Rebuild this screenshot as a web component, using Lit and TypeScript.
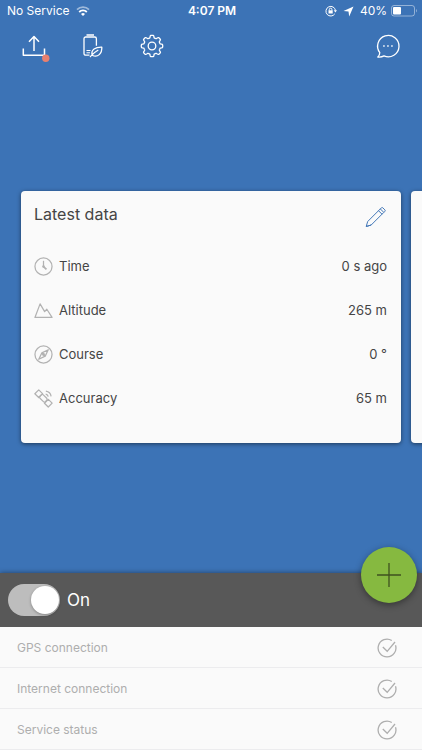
import { LitElement, html, css, svg } from "lit";
import { customElement, property, state } from "lit/decorators.js";

const rowIcons: Record<string, unknown> = {
  time: svg`<circle cx="10" cy="10" r="9"/><path d="M10 4v6" /><path d="M9.500 9.500l3.600 3.600" stroke-width="1.800"/><circle cx="10" cy="10" r=".7"/>`,
  altitude: svg`<path d="M1 17.300L6.400 3l4.800 8.200 2.300-2.500L19 17.300z"/>`,
  course: svg`<circle cx="10" cy="10" r="9"/><path d="M15 5L11.800 11.700 5 15 8.300 8.300z"/><path d="M8.300 8.300l3.500 3.400"/><circle cx="10" cy="10" r=".9"/>`,
  accuracy: svg`<path d="M.9 5L5 .9l4 4L4.900 9z"/><path d="M6.300 7.600l1.400-1.400a1.500 1.500 0 0 1 2.100 0L13.400 9.800a1.500 1.500 0 0 1 0 2.100L12 13.300a1.500 1.500 0 0 1-2.100 0L6.300 9.700a1.500 1.500 0 0 1 0-2.100z"/><path d="M11 15l4.100-4.100 4 4L15 19z"/><path d="M12.300 5.300a3.500 3.500 0 0 1 2.700 2.700M12.500 2.300a6.500 6.500 0 0 1 5.500 5.500"/>`,
};

@customElement("status-bar")
class StatusBar extends LitElement {
  static styles = css`
    :host {
      display: grid;
      grid-template-columns: 1fr auto 1fr;
      align-items: center;
      height: 22px;
      padding: 0 5px 0 7px;
      font-size: 12px;
      line-height: 16px;
    }
    .group {
      display: flex;
      align-items: center;
      gap: 6px;
    }
    .end {
      justify-content: flex-end;
    }
    .clock {
      font-weight: 600;
    }
    .power {
      display: flex;
      align-items: center;
      gap: 4px;
    }
    svg {
      display: block;
    }
  `;

  render() {
    return html`
      <div class="group">
        <span>No Service</span>
        <svg width="14" height="10" viewBox="0 0 14 10" fill="none" stroke="#fff" stroke-width="1.8" aria-hidden="true">
          <path d="M1 3.700a8.500 8.500 0 0 1 12 0" opacity=".5"/>
          <path d="M3.200 6a5.400 5.400 0 0 1 7.600 0"/>
          <path d="M7 10L5 8a2.800 2.800 0 0 1 4 0z" fill="#fff" stroke="none"/>
        </svg>
      </div>
      <span class="clock">4:07 PM</span>
      <div class="group end">
        <svg width="12" height="12" viewBox="0 0 12 12" fill="none" stroke="#fff" aria-hidden="true">
          <path d="M9.800 8.800A4.800 4.800 0 1 1 10.500 5.500"/>
          <path d="M8.700 5.200h3.300l-1.600 2.300z" fill="#fff" stroke="none"/>
          <rect x="3.500" y="5.300" width="4.200" height="3.200" fill="#fff" stroke="none"/>
          <path d="M4.300 5.500V4.500a1.300 1.300 0 0 1 2.600 0v1"/>
        </svg>
        <svg width="11" height="11" viewBox="0 0 11 11" fill="#fff" aria-hidden="true">
          <path d="M10.500.5L6.200 10.500 5.500 5.500.5 5z"/>
        </svg>
        <div class="power">
          <span>40%</span>
          <svg width="26" height="12" viewBox="0 0 26 12" fill="none" aria-hidden="true">
            <rect x=".5" y=".5" width="23" height="10.500" rx="2.500" stroke="#fff" stroke-opacity=".45"/>
            <rect x="2" y="2" width="8" height="7.500" rx="1" fill="#fff"/>
            <path d="M25 4v3.500c1-.4 1-3.100 0-3.500z" fill="#fff" opacity=".55"/>
          </svg>
        </div>
      </div>
    `;
  }
}

@customElement("tool-bar")
class ToolBar extends LitElement {
  static styles = css`
    :host {
      display: flex;
      align-items: center;
      height: 48px;
      padding: 0 20px;
      gap: 31px;
    }
    button {
      display: block;
      padding: 0;
      border: 0;
      background: none;
      color: inherit;
    }
    .last {
      margin-left: auto;
    }
    svg {
      display: block;
      fill: none;
      stroke: currentColor;
      stroke-width: 1.3;
      stroke-linejoin: round;
    }
    .dot {
      fill: #e8806f;
      stroke: none;
    }
  `;

  private gear() {
    const points: string[] = [];
    const steps = 128;
    for (let i = 0; i < steps; i++) {
      const a = (i / steps) * Math.PI * 2;
      const wave = Math.max(-1, Math.min(1, Math.cos(a * 8) * 2 + 0.1));
      const r = 9.5 + wave * 1.2;
      points.push(`${(14 + r * Math.sin(a)).toFixed(2)} ${(14 - r * Math.cos(a)).toFixed(2)}`);
    }
    return `M${points.join("L")}Z`;
  }

  render() {
    return html`
      <button aria-label="Upload">
        <svg width="30" height="32" viewBox="0 0 30 32">
          <path d="M3.300 18.500v6.800h21.200V18.500M14 21V6.500M9 11.700l5-5.200 5 5.200" stroke-width="1.500"/>
          <circle class="dot" cx="25.800" cy="28.200" r="3.700"/>
        </svg>
      </button>
      <button aria-label="Battery saver">
        <svg width="26" height="28" viewBox="0 0 26 28">
          <path d="M8.500 23.200H4.700a1.700 1.700 0 0 1-1.700-1.700V6.700A1.700 1.700 0 0 1 4.700 5h9a1.700 1.700 0 0 1 1.700 1.700v7M5.500 3h7.500"/>
          <path d="M5.500 18.500h4M5.500 20.800h3.500" stroke-width="1"/>
          <path d="M11.200 23.200c-1.600-5.300 3.400-8.300 9.600-8.100.4 6.100-4 11.200-9.600 8.100zM9 25c2.500-2.500 4.500-5 8.300-7"/>
        </svg>
      </button>
      <button aria-label="Settings">
        <svg width="28" height="28" viewBox="0 0 28 28">
          <path d=${this.gear()}/>
          <circle cx="14" cy="14" r="3.800"/>
        </svg>
      </button>
      <button class="last" aria-label="Chat">
        <svg width="28" height="28" viewBox="0 0 28 28">
          <path d="M5.800 20.600A10.700 10.700 0 1 1 10 23.900c-1.800 1-4 1.300-6.200 1.100 1.200-1 2-2.500 2-4.400z"/>
          <path d="M9.200 14h1.500M13.200 14h1.500M17.200 14h1.500" stroke-width="1.500"/>
        </svg>
      </button>
    `;
  }
}

@customElement("data-card")
class DataCard extends LitElement {
  @property() heading = "";
  @property({ attribute: false }) rows: { icon: string; label: string; value: string }[] = [];

  static styles = css`
    :host {
      display: block;
      box-sizing: border-box;
      min-height: 252px;
      padding: 13px 14px 20px 13px;
      border-radius: 4px;
      background: #fafafa;
      color: #454545;
      box-shadow: 0 1px 4px rgba(0, 0, 0, 0.5);
    }
    header {
      display: flex;
      align-items: flex-start;
      justify-content: space-between;
      height: 40px;
    }
    h2 {
      margin: 0;
      font-size: 16px;
      font-weight: 400;
      line-height: 20px;
    }
    button {
      padding: 0;
      border: 0;
      background: none;
      color: #4478b8;
    }
    svg {
      display: block;
      fill: none;
      stroke: currentColor;
      stroke-linejoin: round;
    }
    dl {
      margin: 0;
    }
    .row {
      display: flex;
      align-items: center;
      height: 44px;
      font-size: 13px;
      line-height: 20px;
    }
    .row svg {
      margin-right: 6px;
      color: #b2b2b2;
      stroke-width: 1.3;
    }
    dd {
      margin: 0 0 0 auto;
    }
  `;

  render() {
    if (!this.heading) return null;
    return html`
      <header>
        <h2>${this.heading}</h2>
        <button aria-label="Edit">
          <svg width="22" height="26" viewBox="0 0 22 26">
            <path d="M1.200 22.500l1.500-5L15.300 4.900l3.500 3.500L6.200 21zM1.200 22.500l5-1.500M13.500 6.700l3.500 3.500M15.300 4.900l1.100-1.100a1 1 0 0 1 1.400 0l2.100 2.100a1 1 0 0 1 0 1.400l-1.100 1.100"/>
          </svg>
        </button>
      </header>
      <dl>
        ${this.rows.map(
          (r) => html`
            <div class="row">
              <svg width="19" height="19" viewBox="0 0 20 20" aria-hidden="true">${rowIcons[r.icon]}</svg>
              <dt>${r.label}</dt>
              <dd>${r.value}</dd>
            </div>
          `,
        )}
      </dl>
    `;
  }
}

@customElement("status-panel")
class StatusPanel extends LitElement {
  @state() private on = true;

  static styles = css`
    :host {
      display: block;
      position: relative;
      box-shadow: 0 0 5px rgba(0, 0, 0, 0.45);
    }
    .bar {
      display: flex;
      align-items: center;
      height: 54px;
      padding: 0 8px;
      background: #585858;
      color: #fff;
    }
    label {
      display: flex;
      align-items: center;
      gap: 7px;
      font-size: 17px;
      line-height: 24px;
    }
    input {
      appearance: none;
      display: flex;
      align-items: center;
      box-sizing: border-box;
      width: 52px;
      height: 32px;
      margin: 0;
      padding: 0 1px 0 2px;
      border-radius: 16px;
      background: #bdbdbd;
    }
    input::before {
      content: "";
      width: 28px;
      height: 28px;
      border-radius: 50%;
      background: #fff;
      box-shadow: 0 1px 3px rgba(0, 0, 0, 0.3);
    }
    input:checked::before {
      margin-left: auto;
    }
    .add {
      position: absolute;
      top: -26px;
      right: 5px;
      width: 56px;
      height: 56px;
      padding: 16px;
      border: 0;
      border-radius: 50%;
      background: #86b940;
      color: #3f521f;
      box-shadow: 0 2px 7px rgba(0, 0, 0, 0.4);
    }
    ul {
      margin: 0;
      padding: 0;
      list-style: none;
      background: #fafafa;
    }
    li {
      display: flex;
      align-items: center;
      justify-content: space-between;
      box-sizing: border-box;
      height: 41px;
      padding: 1px 25px 0 17px;
      border-bottom: 1px solid #ececee;
      color: #aeaeae;
      font-size: 12px;
      line-height: 16px;
    }
    svg {
      display: block;
      fill: none;
      stroke: currentColor;
      stroke-width: 1.3;
    }
  `;

  private toggle(e: Event) {
    this.on = (e.target as HTMLInputElement).checked;
  }

  render() {
    return html`
      <div class="bar">
        <label><input type="checkbox" role="switch" .checked=${this.on} @change=${this.toggle} />${this.on ? "On" : "Off"}</label>
      </div>
      <button class="add" aria-label="Add">
        <svg width="24" height="24" viewBox="0 0 24 24"><path d="M12 0v24M0 12h24"/></svg>
      </button>
      <ul>
        ${["GPS connection", "Internet connection", "Service status"].map(
          (name) => html`
            <li>
              <span>${name}</span>
              <svg width="20" height="20" viewBox="0 0 20 20" aria-hidden="true">
                <path d="M14.800 2.500A8.900 8.900 0 1 0 18.500 7.300M5.800 9l4.400 4.300L18 4"/>
              </svg>
            </li>
          `,
        )}
      </ul>
    `;
  }
}

@customElement("app-root")
class AppRoot extends LitElement {
  private rows = [
    { icon: "time", label: "Time", value: "0 s ago" },
    { icon: "altitude", label: "Altitude", value: "265 m" },
    { icon: "course", label: "Course", value: "0 °" },
    { icon: "accuracy", label: "Accuracy", value: "65 m" },
  ];

  static styles = css`
    :host {
      display: flex;
      flex-direction: column;
      min-height: 100vh;
      background: #3c73b6;
      color: #fff;
      font-family: Inter, Roboto, "Liberation Sans", sans-serif;
    }
    main {
      flex: 1;
      display: flex;
      align-items: center;
      gap: 10px;
      padding: 0 21px 9px;
      overflow: hidden;
    }
    data-card {
      flex: 0 0 100%;
    }
  `;

  render() {
    return html`
      <status-bar></status-bar>
      <tool-bar></tool-bar>
      <main>
        <data-card heading="Latest data" .rows=${this.rows}></data-card>
        <data-card></data-card>
      </main>
      <status-panel></status-panel>
    `;
  }
}
